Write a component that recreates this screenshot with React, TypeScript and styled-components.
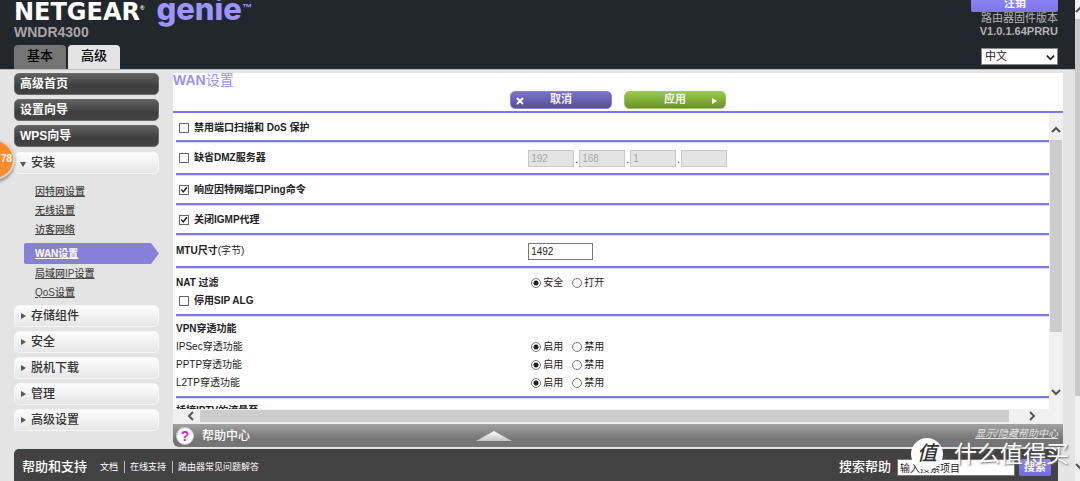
import React from "react";
import styled, { createGlobalStyle, css } from "styled-components";

const GlobalStyle = createGlobalStyle`
  *, *::before, *::after { box-sizing: border-box; }
  body {
    margin: 0;
    background: #e4e4e4;
    color: #222;
    font: 10px/18px "Liberation Sans", "Noto Sans CJK SC", sans-serif;
  }
  button, input, select { font: inherit; margin: 0; }
  ul { list-style: none; margin: 0; padding: 0; }
`;

const Viewport = styled.div`
  position: relative;
  display: flex;
  height: 100vh;
  overflow: hidden;
`;

const Page = styled.div`
  flex: 1;
  min-width: 0;
  display: flex;
  flex-direction: column;
`;

/* ---------- header ---------- */

const Header = styled.header`
  display: flex;
  flex: none;
  justify-content: space-between;
  align-items: flex-end;
  height: 70px;
  padding: 0 17px 0 14px;
  overflow: hidden;
  background: #22272b;
  border-bottom: 1px solid #c0c0c0;
`;

const Brand = styled.div`
  display: flex;
  flex-direction: column;
`;

const Logo = styled.div`
  display: flex;
  align-items: baseline;
  height: 28px;
  white-space: nowrap;
`;

const Maker = styled.span`
  color: #fff;
  font: 700 24px/26px "DejaVu Sans", sans-serif;
`;

const Mark = styled.sup<{ $size: number }>`
  align-self: flex-start;
  margin-top: 6px;
  color: ${(p) => p.color};
  font: 700 ${(p) => p.$size}px/12px "Liberation Sans", sans-serif;
`;

const Product = styled.span`
  margin-left: 12px;
  color: #9c94ff;
  font: 800 31px/26px Inter, sans-serif;
`;

const Model = styled.div`
  margin-bottom: 5px;
  color: #a6a6a6;
  font-size: 14px;
  font-weight: 700;
  line-height: 16px;
`;

const Tabs = styled.nav`
  display: flex;
  gap: 2px;
`;

const Tab = styled.button<{ $active?: boolean }>`
  width: 52px;
  height: 24px;
  padding: 0 0 2px;
  border: 0;
  border-radius: 4px 4px 0 0;
  background: ${(p) => (p.$active ? "#e4e4e4" : "#757575")};
  color: #000;
  font-size: 13px;
  font-weight: 500;
  line-height: 22px;
`;

const Account = styled.div`
  display: flex;
  flex-direction: column;
  align-items: flex-end;
  padding-bottom: 4px;
  color: #b4b4b4;
  font-size: 11px;
  line-height: 13px;
`;

const Logout = styled.button`
  width: 87px;
  height: 20px;
  padding: 0 0 0 1px;
  border: 0;
  border-radius: 2px;
  background: linear-gradient(#8f88f8, #7d75ea);
  color: #fff;
  font-size: 11px;
  font-weight: 700;
  line-height: 22px;
`;

const Version = styled.strong`
  margin-bottom: 10px;
`;

const SelectWrap = styled.label`
  position: relative;
  display: block;
  width: 77px;
  height: 17px;

  svg {
    position: absolute;
    right: 3px;
    top: 5px;
    pointer-events: none;
  }
`;

const Select = styled.select`
  appearance: none;
  display: block;
  width: 100%;
  height: 17px;
  padding: 0 3px;
  border: 1px solid #888;
  border-radius: 0;
  background: #fff;
  color: #222;
  font-size: 11px;
  line-height: 15px;
`;

/* ---------- sidebar ---------- */

const Body = styled.div`
  display: flex;
  align-items: flex-start;
  gap: 14px;
  padding: 3px 12px 2px 14px;
`;

const Sidebar = styled.nav`
  flex: none;
  width: 145px;
  display: flex;
  flex-direction: column;
  gap: 5px;
`;

const Group = styled.ul`
  display: flex;
  flex-direction: column;
  gap: 4px;
`;

const SideButton = styled.button<{ $dark?: boolean }>`
  display: flex;
  align-items: center;
  gap: 4px;
  width: 100%;
  height: 22px;
  padding: 0 5px;
  border-radius: 5px;
  font-size: 12px;
  text-align: left;
  line-height: 18px;
  ${(p) =>
    p.$dark
      ? css`
          border: 1px solid #6a6a6a;
          background: linear-gradient(#626262, #3e3e3e 60%, #444);
          color: #fff;
          font-weight: 700;
        `
      : css`
          border: 1px solid #f6f6f6;
          background: linear-gradient(#fdfdfd, #e6e6e6);
          color: #333;
          font-weight: 500;
        `}
`;

const SubMenu = styled.ul`
  padding: 8px 0 0 10px;
  margin-bottom: -1px;
`;

const SubItem = styled.li<{ $active?: boolean }>`
  height: 19px;
  padding-left: 11px;
  line-height: 19px;

  a { color: #444; font-weight: 500; }

  ${(p) =>
    p.$active &&
    css`
      height: 21px;
      margin-top: 4px;
      line-height: 21px;
      background: #8780d8;
      border-radius: 2px;
      clip-path: polygon(0 0, calc(100% - 8px) 0, 100% 50%, calc(100% - 8px) 100%, 0 100%);
      a { color: #fff; font-weight: 700; }
    `}
`;

/* ---------- main panel ---------- */

const Main = styled.main`
  flex: 1;
  min-width: 0;
`;

const Toolbar = styled.div`
  display: flex;
  flex-direction: column;
  height: 40px;
  background: #fff;
  border-bottom: 2px solid #7f78e6;
`;

const Title = styled.h1`
  margin: 0;
  color: #9a93f8;
  font-size: 14px;
  font-weight: 700;
  line-height: 14px;

  span { font-weight: 400; }
`;

const Actions = styled.div`
  display: flex;
  justify-content: center;
  gap: 12px;
  margin-top: 4px;
`;

const ActionButton = styled.button<{ $tone: "violet" | "green" }>`
  display: grid;
  grid-template-columns: 10px 1fr 10px;
  align-items: center;
  width: 102px;
  height: 18px;
  padding: 0 5px 2px;
  border: 1px solid ${(p) => (p.$tone === "violet" ? "#8a84c8" : "#9cc860")};
  border-radius: 5px;
  background: ${(p) =>
    p.$tone === "violet"
      ? "linear-gradient(#7a73cc, #554e98)"
      : "linear-gradient(#98cc44, #6b9130)"};
  color: #f4f4f4;
  font-size: 11px;
  font-weight: 700;
  line-height: 14px;

  svg { margin-top: 3px; }
  span { grid-column: 2; }
`;

const Pane = styled.div`
  display: flex;
  height: 296px;
  background: #fff;
`;

const Form = styled.form`
  flex: 1;
  min-width: 0;
  padding-left: 3px;
  overflow: hidden;
`;

const Row = styled.div<{ $height?: number; $top?: number }>`
  display: flex;
  flex-direction: column;
  min-height: ${(p) => p.$height ?? 30}px;
  padding-top: ${(p) => p.$top ?? 6}px;
  border-bottom: 2px solid #7f7ae2;
  box-shadow: 0 1px 0 #dcdafa;
`;

const Line = styled.div`
  display: grid;
  grid-template-columns: 40% 1fr;
  align-items: center;
  min-height: 18px;
`;

const Field = styled.div`
  display: flex;
  align-items: center;
  padding-left: 3px;
`;

const CheckLabel = styled.label`
  display: flex;
  align-items: center;
  gap: 5px;
  padding-left: 3px;
  font-weight: 700;
`;

const Checkbox = styled.input.attrs({ type: "checkbox" })`
  appearance: none;
  display: grid;
  place-items: center;
  width: 10px;
  height: 10px;
  border: 1px solid #666;
  background: #fff;

  &:checked::before {
    content: "";
    width: 8px;
    height: 8px;
    background: #222;
    clip-path: polygon(8% 50%, 22% 38%, 40% 58%, 78% 10%, 94% 22%, 42% 88%);
  }
`;

const RadioLabel = styled.label`
  display: flex;
  align-items: center;
  gap: 2px;
  width: 41px;
`;

const Radio = styled.input.attrs({ type: "radio" })`
  appearance: none;
  flex: none;
  width: 10px;
  height: 10px;
  border: 1px solid #777;
  border-radius: 50%;
  background: #fff;

  &:checked { background: radial-gradient(circle, #222 0 2px, #fff 3px); }
`;

const RadioField = styled(Field)`
  padding-left: 6px;
`;

const TextInput = styled.input<{ $width: number }>`
  width: ${(p) => p.$width}px;
  height: 17px;
  padding: 0 2px;
  border: 1px solid #777;
  border-radius: 0;
  background: #fff;
  color: #222;
  font-size: 10px;
  line-height: 15px;

  &:disabled {
    border-color: #c8c8c8;
    background: #e4e4e4;
    color: #a8a8a8;
  }
`;

const Dot = styled.span`
  width: 5px;
  padding-top: 4px;
  text-align: center;
  line-height: 12px;
`;

/* ---------- scroll bars ---------- */

const VTrack = styled.div`
  flex: none;
  width: 14px;
  display: flex;
  flex-direction: column;
  align-items: center;
  padding: 12px 0;
  background: #f0f0f0;
`;

const VThumb = styled.div`
  width: 12px;
  height: 192px;
  margin: 5px 0 auto;
  background: #cdcdcd;
`;

const HTrack = styled.div`
  display: flex;
  align-items: center;
  height: 15px;
  padding: 0 26px 2px 13px;
  background: #f0f0f0;
`;

const HThumb = styled.div`
  flex: 1;
  height: 12px;
  margin: 0 18px 0 4px;
  background: #cdcdcd;
`;

const PageTrack = styled.div`
  flex: none;
  width: 5px;
  display: flex;
  flex-direction: column;
  align-items: flex-start;
  padding: 5px 0 10px;
  overflow: hidden;
  background: #f0f0f0;
`;

const PageThumb = styled.div`
  width: 100%;
  height: 81%;
  margin: 4px 0 auto;
  background: #c9c9c9;
`;

/* ---------- help bar and footer ---------- */

const HelpBar = styled.div`
  display: grid;
  grid-template-columns: 34% auto 1fr;
  align-items: center;
  height: 23px;
  padding: 0 5px 0 3px;
  border-radius: 0 0 0 6px;
  background: linear-gradient(#a2a2a2, #757575 65%, #757575);
`;

const HelpCenter = styled.button`
  display: flex;
  align-items: center;
  gap: 8px;
  padding: 0;
  border: 0;
  background: none;
  color: #fff;
  font-size: 12px;
  font-weight: 500;
  line-height: 20px;
`;

const HelpIcon = styled.i`
  width: 18px;
  height: 18px;
  border: 1px solid #c8c8c8;
  border-radius: 50%;
  background: #fff;
  color: #d81fd8;
  font-style: normal;
  font-size: 14px;
  font-weight: 700;
  line-height: 16px;
  text-align: center;
`;

const HelpToggle = styled.a`
  justify-self: end;
  margin-bottom: 3px;
  color: #e4e4e4;
  font-style: italic;
`;

const Footer = styled.footer`
  flex: 1;
  display: flex;
  align-items: flex-start;
  justify-content: space-between;
  margin: 0 17px 0 14px;
  padding: 9px 7px 0 8px;
  border-radius: 5px 0 0 0;
  background: #424242;
  color: #fff;
`;

const Support = styled.div`
  display: flex;
  align-items: center;
`;

const FooterTitle = styled.strong`
  font-size: 13px;
  font-weight: 500;
  line-height: 18px;
`;

const FooterLinks = styled.ul`
  display: flex;
  margin-left: 7px;

  li {
    padding: 0 6px;
    font-size: 9px;
    line-height: 12px;
  }
  li + li { border-left: 1px solid #bbb; padding-left: 5px; }
  a { color: #fff; text-decoration: none; }
`;

const Search = styled.form`
  display: flex;
  align-items: center;
  gap: 4px;

  label {
    margin-right: 2px;
    font-size: 13px;
    font-weight: 500;
    line-height: 18px;
  }
`;

const SearchButton = styled.button`
  width: 32px;
  height: 17px;
  padding: 0;
  border: 0;
  border-radius: 2px;
  background: linear-gradient(#8f88f8, #7069e0);
  color: #fff;
  font-size: 11px;
  font-weight: 700;
  line-height: 17px;
`;

/* ---------- overlays ---------- */

const Badge = styled.div`
  position: absolute;
  left: -26px;
  top: 139px;
  width: 41px;
  height: 41px;
  padding-right: 1px;
  border: 2px solid #d8d8d8;
  border-radius: 50%;
  background: #ff8a2c;
  box-shadow: 0 2px 3px #888;
  color: #fff;
  font-weight: 700;
  line-height: 36px;
  text-align: right;
`;

const Watermark = styled.div`
  position: absolute;
  right: 11px;
  bottom: 11px;
  display: flex;
  align-items: center;
  gap: 11px;
  color: #fff;
  font-size: 23px;
  line-height: 32px;
  text-shadow: 1px 1px 2px #666;
  pointer-events: none;
`;

const Seal = styled.span`
  width: 32px;
  height: 32px;
  border-radius: 50%;
  background: #fff;
  color: #333;
  font-size: 20px;
  font-style: italic;
  font-weight: 500;
  line-height: 30px;
  text-align: center;
  text-shadow: none;
`;

type Direction = "up" | "down" | "left" | "right";
const turns: Record<Direction, number> = { up: 0, right: 90, down: 180, left: 270 };

function Chevron({ to, size = 10, color = "#555" }: { to: Direction; size?: number; color?: string }) {
  return (
    <svg width={size} height={size} viewBox="0 0 10 10" aria-hidden="true">
      <path
        d="M1 7 L5 3 L9 7"
        fill="none"
        stroke={color}
        strokeWidth="2"
        transform={`rotate(${turns[to]} 5 5)`}
      />
    </svg>
  );
}

function Caret({ open }: { open?: boolean }) {
  return (
    <svg width="7" height="8" viewBox="0 0 7 8" aria-hidden="true">
      <path d={open ? "M0 3h6l-3 5z" : "M1 1v6l5-3z"} fill="#555" />
    </svg>
  );
}

function RadioPair({ name, options }: { name: string; options: [string, string] }) {
  return (
    <RadioField>
      {options.map((text, i) => (
        <RadioLabel key={text}>
          <Radio name={name} defaultChecked={i === 0} />
          {text}
        </RadioLabel>
      ))}
    </RadioField>
  );
}

function Check({ text, checked }: { text: string; checked?: boolean }) {
  return (
    <CheckLabel>
      <Checkbox defaultChecked={checked} />
      {text}
    </CheckLabel>
  );
}

const shortcuts = ["高级首页", "设置向导", "WPS向导"];
const setupLinks = ["因特网设置", "无线设置", "访客网络", "WAN设置", "局域网IP设置", "QoS设置"];
const sections = ["存储组件", "安全", "脱机下载", "管理", "高级设置"];
const passthrough = ["IPSec", "PPTP", "L2TP"];
const dmzAddress = ["192", "168", "1", ""];
const footerLinks = ["文档", "在线支持", "路由器常见问题解答"];

export default function App() {
  return (
    <>
      <GlobalStyle />
      <Viewport>
        <Page>
          <Header>
            <Brand>
              <Logo>
                <Maker>NETGEAR</Maker>
                <Mark $size={6} color="#fff">®</Mark>
                <Product>genie</Product>
                <Mark $size={10} color="#9c94ff">™</Mark>
              </Logo>
              <Model>WNDR4300</Model>
              <Tabs>
                <Tab type="button">基本</Tab>
                <Tab type="button" $active>高级</Tab>
              </Tabs>
            </Brand>
            <Account>
              <Logout type="button">注销</Logout>
              <span>路由器固件版本</span>
              <Version>V1.0.1.64PRRU</Version>
              <SelectWrap>
                <Select aria-label="语言" defaultValue="zh">
                  <option value="zh">中文</option>
                  <option value="en">English</option>
                </Select>
                <Chevron to="down" size={9} color="#222" />
              </SelectWrap>
            </Account>
          </Header>

          <Body>
            <Sidebar>
              <Group>
                {shortcuts.map((text) => (
                  <li key={text}>
                    <SideButton type="button" $dark>{text}</SideButton>
                  </li>
                ))}
              </Group>
              <Group>
                <li>
                  <SideButton type="button"><Caret open />安装</SideButton>
                  <SubMenu>
                    {setupLinks.map((text) => (
                      <SubItem key={text} $active={text === "WAN设置"}>
                        <a href="#">{text}</a>
                      </SubItem>
                    ))}
                  </SubMenu>
                </li>
                {sections.map((text) => (
                  <li key={text}>
                    <SideButton type="button"><Caret />{text}</SideButton>
                  </li>
                ))}
              </Group>
            </Sidebar>

            <Main>
              <Toolbar>
                <Title>WAN<span>设置</span></Title>
                <Actions>
                  <ActionButton type="button" $tone="violet">
                    <svg width="8" height="8" viewBox="0 0 8 8" aria-hidden="true">
                      <path d="M1 1l6 6M7 1l-6 6" stroke="#fff" strokeWidth="2" />
                    </svg>
                    <span>取消</span>
                  </ActionButton>
                  <ActionButton type="button" $tone="green">
                    <span>应用</span>
                    <svg width="8" height="8" viewBox="0 0 8 8" aria-hidden="true">
                      <path d="M2 1v6l5-3z" fill="#fff" />
                    </svg>
                  </ActionButton>
                </Actions>
              </Toolbar>
              <Pane>
                <Form>
                  <Row $height={29}><Line><Check text="禁用端口扫描和 DoS 保护" /></Line></Row>
                  <Row $height={33} $top={7}>
                    <Line>
                      <Check text="缺省DMZ服务器" />
                      <Field>
                        {dmzAddress.map((part, i) => (
                          <React.Fragment key={i}>
                            {i > 0 && <Dot>.</Dot>}
                            <TextInput $width={46} aria-label={`DMZ ${i + 1}`} defaultValue={part} disabled />
                          </React.Fragment>
                        ))}
                      </Field>
                    </Line>
                  </Row>
                  <Row><Line><Check text="响应因特网端口Ping命令" checked /></Line></Row>
                  <Row><Line><Check text="关闭IGMP代理" checked /></Line></Row>
                  <Row $height={33} $top={7}>
                    <Line>
                      <label htmlFor="mtu"><b>MTU尺寸</b>(字节)</label>
                      <Field><TextInput id="mtu" $width={65} defaultValue="1492" /></Field>
                    </Line>
                  </Row>
                  <Row $height={48}>
                    <Line>
                      <b>NAT 过滤</b>
                      <RadioPair name="nat" options={["安全", "打开"]} />
                    </Line>
                    <Line><Check text="停用SIP ALG" /></Line>
                  </Row>
                  <Row $height={82} $top={4}>
                    <Line><b>VPN穿透功能</b></Line>
                    {passthrough.map((kind) => (
                      <Line key={kind}>
                        <span>{kind}穿透功能</span>
                        <RadioPair name={kind} options={["启用", "禁用"]} />
                      </Line>
                    ))}
                  </Row>
                  <Row $top={4}><Line><b>桥接IPTV的流量至</b></Line></Row>
                </Form>
                <VTrack>
                  <Chevron to="up" />
                  <VThumb />
                  <Chevron to="down" />
                </VTrack>
              </Pane>
              <HTrack>
                <Chevron to="left" />
                <HThumb />
                <Chevron to="right" />
              </HTrack>
              <HelpBar>
                <HelpCenter type="button"><HelpIcon>?</HelpIcon>帮助中心</HelpCenter>
                <svg width="36" height="10" viewBox="0 0 36 10" aria-hidden="true">
                  <defs>
                    <linearGradient id="peak" x1="0" y1="0" x2="0" y2="1">
                      <stop offset="0" stopColor="#fff" />
                      <stop offset="1" stopColor="#c4c4c4" />
                    </linearGradient>
                  </defs>
                  <path d="M18 0L36 10H0z" fill="url(#peak)" />
                </svg>
                <HelpToggle href="#">显示/隐藏帮助中心</HelpToggle>
              </HelpBar>
            </Main>
          </Body>

          <Footer>
            <Support>
              <FooterTitle>帮助和支持</FooterTitle>
              <FooterLinks>
                {footerLinks.map((text) => (
                  <li key={text}><a href="#">{text}</a></li>
                ))}
              </FooterLinks>
            </Support>
            <Search>
              <label htmlFor="query">搜索帮助</label>
              <TextInput id="query" $width={118} defaultValue="输入搜索项目" />
              <SearchButton type="button">搜索</SearchButton>
            </Search>
          </Footer>
        </Page>

        <PageTrack>
          <Chevron to="up" />
          <PageThumb />
          <Chevron to="down" />
        </PageTrack>

        <Badge>78</Badge>
        <Watermark><Seal>值</Seal>什么值得买</Watermark>
      </Viewport>
    </>
  );
}
